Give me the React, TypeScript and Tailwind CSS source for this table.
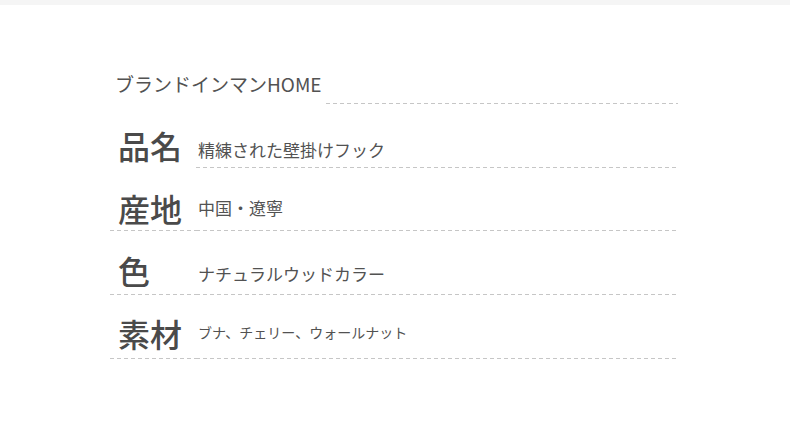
import type { ReactNode } from "react";

const DASH = "h-px w-full bg-[repeating-linear-gradient(to_right,#c6c6c6_0_4px,transparent_4px_7px)]";

interface SpecRowProps {
  label: string;
  value: ReactNode;
  rowHeight: string;
  labelPad: string;
  valuePad: string;
  valueSize?: string;
  lineUnderLabel?: boolean;
}

function SpecRow({ label, value, rowHeight, labelPad, valuePad, valueSize = "text-[17px]", lineUnderLabel = true }: SpecRowProps) {
  return (
    <div className={`flex ${rowHeight}`}>
      <div className="flex w-[86px] flex-col justify-end">
        <span className={`pl-[8px] text-[32px] font-medium leading-none text-[#4a4a4a] ${labelPad}`}>{label}</span>
        {lineUnderLabel ? <div className={DASH} /> : <div className="h-px" />}
      </div>
      <div className="flex flex-1 flex-col justify-end">
        <span className={`pl-[2px] leading-none text-[#525252] ${valueSize} ${valuePad}`}>{value}</span>
        <div className={DASH} />
      </div>
    </div>
  );
}

export default function App() {
  return (
    <div className="h-[434px] w-[790px] bg-white font-['Noto_Sans_CJK_JP','Noto_Sans',sans-serif]">
      <div className="h-[5px] bg-[#f5f5f5]" />
      <div className="ml-[110px] w-[568px] pt-[55px]">
        {/* brand header */}
        <div className="flex h-[44px]">
          <div className="flex flex-col justify-end">
            <span className="pl-[5px] pr-[4px] pb-[10px] text-[19px] leading-none text-[#525252]">ブランドインマンHOME</span>
            <div className="h-px" />
          </div>
          <div className="flex flex-1 flex-col justify-end">
            <div className={DASH} />
          </div>
        </div>

        <SpecRow label="品名" value="精練された壁掛けフック" rowHeight="h-[64px]" labelPad="pb-[6px]" valuePad="pb-[9px]" lineUnderLabel={false} />
        <SpecRow label="産地" value="中国・遼寧" rowHeight="h-[63px]" labelPad="pb-[6px]" valuePad="pb-[14px]" />
        <SpecRow label="色" value="ナチュラルウッドカラー" rowHeight="h-[64px]" labelPad="pb-[8px]" valuePad="pb-[12px]" />
        <SpecRow label="素材" value="ブナ、チェリー、ウォールナット" rowHeight="h-[64px]" labelPad="pb-[9px]" valuePad="pb-[19px]" valueSize="text-[14px]" />
      </div>
    </div>
  );
}
